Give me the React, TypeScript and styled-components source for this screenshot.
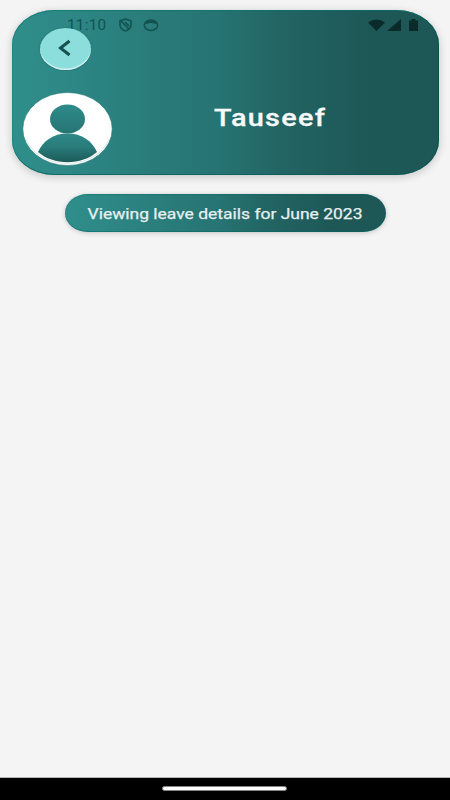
import React from 'react';
import styled, { createGlobalStyle } from 'styled-components';

const GlobalStyle = createGlobalStyle`
  * { box-sizing: border-box; }
  body { margin: 0; background: #f4f4f4; font-family: Roboto, sans-serif; }
`;

const Screen = styled.div`
  position: relative;
  display: flex;
  flex-direction: column;
  width: 450px;
  height: 800px;
  overflow: hidden;
  background: #f4f4f4;
`;

const gradient = 'linear-gradient(90deg, #2f8e8b 0%, #2d8886 12%, #297b79 34%, #267473 48%, #226664 62%, #1f5d5c 75%, #1d5756 84%, #1d5756 100%)';

const Header = styled.header`
  display: flex;
  flex: none;
  flex-direction: column;
  justify-content: space-between;
  width: 427px;
  height: 165px;
  margin: 10px 0 0 12px;
  padding: 18px 0 9px 10px;
  border-radius: 42px / 35px;
  background: ${gradient};
  box-shadow: inset 0 -1px 0 rgba(0, 92, 88, 0.65), inset 0 1px 0 rgba(0, 115, 110, 0.55),
    inset -1px 0 0 rgba(0, 75, 73, 0.6), inset 1px 0 0 rgba(0, 125, 120, 0.35),
    0 2px 8px rgba(0, 0, 0, 0.2);
`;

const StatusBar = styled.div`
  position: absolute;
  top: 16px;
  left: 67px;
  right: 32px;
  height: 17px;
  display: flex;
  align-items: center;
  color: #145251;
`;

const Clock = styled.span`
  width: 39px;
  font-size: 14px;
  line-height: 17px;
  letter-spacing: 0.2px;
  white-space: nowrap;
  transform: translateY(1px) scaleX(1.1);
  transform-origin: left;
`;

const Notices = styled.div`
  display: flex;
  gap: 11px;
  margin-left: 13px;
`;

const Signals = styled.div`
  display: flex;
  align-items: center;
  margin-left: auto;
  color: #0b2b2b;
`;

const Battery = styled.svg`
  margin-left: 8px;
`;

const Cellular = styled.svg`
  margin-left: 2px;
`;

const Back = styled.button`
  position: relative;
  display: grid;
  place-items: center;
  width: 51px;
  height: 42px;
  margin-left: 18px;
  padding: 0 2px 2px 0;
  border: 0;
  border-radius: 50%;
  background: #8bdedc;
  box-shadow: inset 0 -1.5px 0.5px #d7efee, 0 0 1.5px rgba(0, 75, 75, 0.6);
`;

const Identity = styled.div`
  display: grid;
  grid-template-columns: 90px 1fr;
`;

const Avatar = styled.svg`
  display: block;
  width: 91px;
  height: 74px;
`;

const Name = styled.h1`
  margin: 13px 0 0 102px;
  font-size: 23px;
  font-weight: 500;
  line-height: 28px;
  letter-spacing: 1px;
  white-space: nowrap;
  color: #f7f8f8;
  -webkit-text-stroke: 0.3px #f7f8f8;
  transform: scaleX(1.255);
  transform-origin: left;
`;

const Notice = styled.div`
  display: flex;
  align-items: center;
  justify-content: center;
  width: 321px;
  height: 38px;
  margin: 19px 0 0 64.5px;
  padding-top: 2px;
  border-radius: 23px / 19px;
  background: ${gradient};
  box-shadow: inset 0 -1px 0 rgba(0, 105, 100, 0.55), inset 0 1px 0 rgba(0, 105, 100, 0.4),
    0 1px 5px rgba(0, 0, 0, 0.2);
`;

const NoticeText = styled.span`
  font-size: 15px;
  line-height: 20px;
  white-space: nowrap;
  color: #e6f0f0;
  -webkit-text-stroke: 0.25px #e6f0f0;
  transform: scaleX(1.165);
`;

const NavBar = styled.footer`
  display: flex;
  justify-content: center;
  height: 22px;
  margin-top: auto;
  padding: 8px 1px 0 0;
  background: #000;
  box-shadow: 0 -1px 0 #b5b5b5;
`;

const Handle = styled.div`
  width: 125px;
  height: 5px;
  border: 1px solid #858585;
  border-radius: 3px;
  background: #fff;
`;

function SystemStatus() {
  return (
    <StatusBar>
      <Clock>11:10</Clock>
      <Notices>
        <svg width="13" height="14" viewBox="0 0 13 14" fill="none" stroke="currentColor" strokeWidth="1.6">
          <path d="M6.5 1 12 2.8V7c0 3-2.5 5-5.5 6C3.5 12 1 10 1 7V2.8Z" />
          <path d="m2 3 8 8M6 4l4 4" />
        </svg>
        <svg width="16" height="14" viewBox="0 0 16 14">
          <ellipse cx="8" cy="7.2" rx="6.7" ry="5.2" fill="none" stroke="currentColor" strokeWidth="1.5" />
          <path d="M2 5C4 .7 12 .7 14 5q-1.5 1.5-3 .5-3-1-6 0Q3.5 6.5 2 5" fill="currentColor" />
        </svg>
      </Notices>
      <Signals>
        <svg width="17" height="12" viewBox="0 0 17 12" fill="currentColor">
          <path d="M0 3.5Q8.5-2.500 17 3.5L8.5 12Z" />
        </svg>
        <Cellular width="14" height="12" viewBox="0 0 14 12" fill="currentColor">
          <path d="M14 0v12H0Z" />
        </Cellular>
        <Battery width="9" height="12" viewBox="0 0 9 12" fill="currentColor">
          <path d="M2.5 0h4v1.500H9V12H0V1.500h2.500Z" />
        </Battery>
      </Signals>
    </StatusBar>
  );
}

function ProfileHeader() {
  return (
    <Header>
      <Back aria-label="Back">
        <svg width="13" height="18" viewBox="0 0 13 18" fill="none" stroke="#15504f" strokeWidth="3">
          <path d="M11.5 2 2.5 9l9 7" />
        </svg>
      </Back>
      <Identity>
        <Avatar viewBox="0 0 91 74">
          <defs>
            <linearGradient id="head" x1="0" y1="0" x2="0" y2="1">
              <stop offset="0" stopColor="#2e8b89" />
              <stop offset="1" stopColor="#267574" />
            </linearGradient>
            <linearGradient id="body" x1="0" y1="0" x2="0" y2="1">
              <stop offset="0" stopColor="#2e8987" />
              <stop offset="0.5" stopColor="#287b79" />
              <stop offset="1" stopColor="#1c5a59" />
            </linearGradient>
          </defs>
          <ellipse cx="45.5" cy="37" rx="44.7" ry="36.5" fill="#fff" stroke="#24807d" strokeWidth="0.6" />
          <ellipse cx="45.5" cy="27" rx="17.5" ry="14.5" fill="url(#head)" />
          <path d="M16 60C21 49 31 41.500 45.500 41.500S70 49 75 60C60 73.500 31 73.500 16 60Z" fill="url(#body)" />
          <path d="M4 47C10 62 26 71.300 45.500 71.300S81 62 87 47" fill="none" stroke="#c8dcdb" strokeWidth="0.7" />
        </Avatar>
        <Name>Tauseef</Name>
      </Identity>
    </Header>
  );
}

export default function App() {
  return (
    <Screen>
      <GlobalStyle />
      <SystemStatus />
      <ProfileHeader />
      <Notice>
        <NoticeText>Viewing leave details for June 2023</NoticeText>
      </Notice>
      <NavBar>
        <Handle />
      </NavBar>
    </Screen>
  );
}
